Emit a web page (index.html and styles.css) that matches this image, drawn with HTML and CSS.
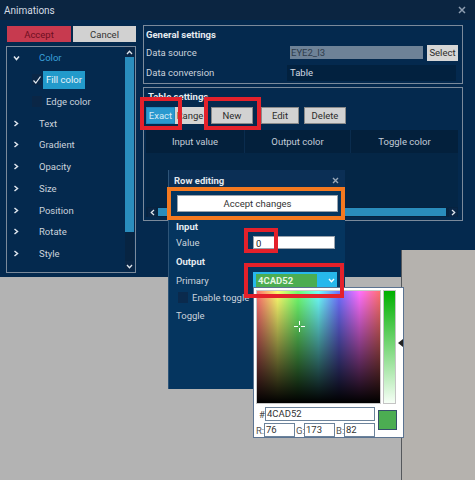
FILE: index.html
```html
<!DOCTYPE html>
<html lang="en">
<head>
    <meta charset="UTF-8">
    <title>Animations</title>
    <link rel="stylesheet" href="styles.css">
</head>
<body>
<div class="screen">
    <div class="window">
        <div class="titlebar">
            <span>Animations</span>
            <svg class="close" width="8" height="8" viewBox="0 0 8 8"><path d="M1 1L7 7M7 1L1 7" stroke="#8d9db0" stroke-width="1.5"/></svg>
        </div>
        <div class="win-body">
            <div class="left-col">
                <div class="action-row">
                    <button class="btn btn-accept">Accept</button>
                    <button class="btn btn-cancel">Cancel</button>
                </div>
                <div class="tree">
                    <ul class="tree-list">
                        <li class="tree-item open">
                            <span class="chev"><svg width="7" height="6" viewBox="0 0 7 6"><polyline points="1,1.5 3.5,4.5 6,1.5" fill="none" stroke="#dfe6ee" stroke-width="1.5"/></svg></span>
                            <span class="label-open">Color</span>
                        </li>
                        <li class="tree-item child">
                            <span class="check"><svg width="10" height="10" viewBox="0 0 10 10"><polyline points="1.5,5.5 3.8,8 8.5,1.5" fill="none" stroke="#e6ecf2" stroke-width="1.2"/></svg></span>
                            <span class="label-sel">Fill color</span>
                        </li>
                        <li class="tree-item child">
                            <span class="check"></span>
                            <span class="label-child">Edge color</span>
                        </li>
                        <li class="tree-item"><span class="chev"><svg width="6" height="7" viewBox="0 0 6 7"><polyline points="1.5,1 4.5,3.5 1.5,6" fill="none" stroke="#dfe6ee" stroke-width="1.5"/></svg></span>Text</li>
                        <li class="tree-item"><span class="chev"><svg width="6" height="7" viewBox="0 0 6 7"><polyline points="1.5,1 4.5,3.5 1.5,6" fill="none" stroke="#dfe6ee" stroke-width="1.5"/></svg></span>Gradient</li>
                        <li class="tree-item"><span class="chev"><svg width="6" height="7" viewBox="0 0 6 7"><polyline points="1.5,1 4.5,3.5 1.5,6" fill="none" stroke="#dfe6ee" stroke-width="1.5"/></svg></span>Opacity</li>
                        <li class="tree-item"><span class="chev"><svg width="6" height="7" viewBox="0 0 6 7"><polyline points="1.5,1 4.5,3.5 1.5,6" fill="none" stroke="#dfe6ee" stroke-width="1.5"/></svg></span>Size</li>
                        <li class="tree-item"><span class="chev"><svg width="6" height="7" viewBox="0 0 6 7"><polyline points="1.5,1 4.5,3.5 1.5,6" fill="none" stroke="#dfe6ee" stroke-width="1.5"/></svg></span>Position</li>
                        <li class="tree-item"><span class="chev"><svg width="6" height="7" viewBox="0 0 6 7"><polyline points="1.5,1 4.5,3.5 1.5,6" fill="none" stroke="#dfe6ee" stroke-width="1.5"/></svg></span>Rotate</li>
                        <li class="tree-item"><span class="chev"><svg width="6" height="7" viewBox="0 0 6 7"><polyline points="1.5,1 4.5,3.5 1.5,6" fill="none" stroke="#dfe6ee" stroke-width="1.5"/></svg></span>Style</li>
                        <li class="tree-item"><span class="chev"><svg width="6" height="7" viewBox="0 0 6 7"><polyline points="1.5,1 4.5,3.5 1.5,6" fill="none" stroke="#dfe6ee" stroke-width="1.5"/></svg></span>Fill</li>
                    </ul>
                    <div class="vscroll">
                        <div class="sb-arrow"><svg width="7" height="5" viewBox="0 0 7 5"><polyline points="1,4 3.5,1.3 6,4" fill="none" stroke="#dfe6ee" stroke-width="1.3"/></svg></div>
                        <div class="sb-thumb"></div>
                        <div class="sb-track"></div>
                        <div class="sb-arrow"><svg width="7" height="5" viewBox="0 0 7 5"><polyline points="1,1 3.5,3.7 6,1" fill="none" stroke="#dfe6ee" stroke-width="1.3"/></svg></div>
                    </div>
                </div>
            </div>

            <div class="right-col">
                <div class="group general">
                    <div class="group-title">General settings</div>
                    <div class="field-row">
                        <span class="field-label">Data source</span>
                        <span class="source-input">EYE2_I3</span>
                        <button class="btn select-btn">Select</button>
                    </div>
                    <div class="field-row second">
                        <span class="field-label">Data conversion</span>
                        <span class="conv-field">Table</span>
                    </div>
                </div>

                <div class="group table-group">
                    <div class="group-title">Table settings</div>
                    <div class="tool-row">
                        <button class="btn btn-exact">Exact</button>
                        <button class="btn btn-range">Range</button>
                        <button class="btn btn-new">New</button>
                        <button class="btn btn-edit">Edit</button>
                        <button class="btn btn-delete">Delete</button>
                    </div>
                    <div class="table-head">
                        <span>Input value</span>
                        <span>Output color</span>
                        <span>Toggle color</span>
                    </div>
                    <div class="table-body"></div>
                    <div class="hscroll">
                        <div class="hs-arrow"><svg width="5" height="7" viewBox="0 0 5 7"><polyline points="4,1 1.3,3.5 4,6" fill="none" stroke="#dfe6ee" stroke-width="1.3"/></svg></div>
                        <div class="hs-thumb"></div>
                        <div class="hs-arrow"><svg width="5" height="7" viewBox="0 0 5 7"><polyline points="1,1 3.7,3.5 1,6" fill="none" stroke="#dfe6ee" stroke-width="1.3"/></svg></div>
                    </div>
                </div>
            </div>
        </div>
    </div>

    <div class="dock-right"></div>

    <!-- row editing dialog -->
    <div class="row-dialog">
        <div class="dialog-head">
            <span>Row editing</span>
            <svg width="7" height="7" viewBox="0 0 7 7"><path d="M1 1L6 6M6 1L1 6" stroke="#9aa8b8" stroke-width="1.4"/></svg>
        </div>
        <div class="dialog-body">
            <button class="btn btn-apply">Accept changes</button>
            <div class="sect">Input</div>
            <div class="d-row value-row">
                <span class="d-label">Value</span>
                <span class="value-input">0</span>
            </div>
            <div class="sect out">Output</div>
            <div class="d-row primary-row">
                <span class="d-label">Primary</span>
                <span class="color-drop">
                    <span class="color-chip">4CAD52</span>
                    <svg width="7" height="5" viewBox="0 0 7 5"><polyline points="1,1 3.5,3.7 6,1" fill="none" stroke="#ffffff" stroke-width="1.4"/></svg>
                </span>
            </div>
            <div class="d-row toggle-row">
                <span class="check"></span>
                <span>Enable toggle</span>
            </div>
            <div class="d-row toggle-label">Toggle</div>
        </div>
    </div>

    <!-- colour picker popup -->
    <div class="picker">
        <div class="pick-top">
            <div class="sv-area">
                <svg class="cross" width="11" height="11" viewBox="0 0 11 11"><path d="M5.5 0V4M5.5 7V11M0 5.5H4M7 5.5H11" stroke="#ffffff" stroke-width="1"/></svg>
            </div>
            <div class="sat-bar"></div>
            <svg class="sat-arrow" width="5" height="8" viewBox="0 0 5 8"><polygon points="5,0 0,4 5,8" fill="#222"/></svg>
        </div>
        <div class="pick-bottom">
            <div class="pick-fields">
                <div class="hex-row">
                    <span class="hash">#</span>
                    <span class="p-input hex-input">4CAD52</span>
                </div>
                <div class="rgb-row">
                    <span class="rgb-lbl">R:</span><span class="p-input rgb-input">76</span>
                    <span class="rgb-lbl">G:</span><span class="p-input rgb-input">173</span>
                    <span class="rgb-lbl">B:</span><span class="p-input rgb-input">82</span>
                </div>
            </div>
            <div class="swatch"></div>
        </div>
    </div>

    <!-- highlight marks -->
    <div class="mark mark-exact"></div>
    <div class="mark mark-new"></div>
    <div class="mark mark-value"></div>
    <div class="mark mark-primary"></div>
    <div class="mark mark-apply"></div>
</div>
</body>
</html>
```

FILE: styles.css
```css
* {
    box-sizing: border-box;
}

body {
    margin: 0;
    background: #b3b3b3;
    font-family: Roboto, "Liberation Sans", sans-serif;
    font-size: 9.5px;
    color: #cbd3dc;
}

.screen {
    position: relative;
    width: 475px;
    height: 480px;
    overflow: hidden;
}

.window {
    width: 475px;
    height: 277px;
    background: #04294e;
}

.titlebar {
    height: 20px;
    background: #0b2541;
    display: flex;
    align-items: center;
    justify-content: space-between;
    padding: 0 9px 0 4px;
    font-size: 10px;
    color: #d5dce4;
}

.win-body {
    display: flex;
    gap: 7px;
    padding: 5px 12px 0 6px;
}

/* buttons */
.btn {
    font-family: inherit;
    font-size: 9.5px;
    height: 17px;
    padding: 0;
    border: 1px solid #8a8a8a;
    background: #d2d2d2;
    color: #2c2c2c;
    cursor: pointer;
}

/* left column */
.left-col {
    width: 130px;
    padding-top: 1px;
}

.action-row {
    display: flex;
    gap: 2px;
    height: 16px;
    margin-left: 1px;
}

.btn-accept {
    width: 64px;
    height: 16px;
    background: #c73a4f;
    border-color: #c73a4f;
    color: #6e0f1f;
}

.btn-cancel {
    width: 63px;
    height: 16px;
    background: #d1d1d1;
    border-color: #d1d1d1;
    color: #333;
}

.tree {
    margin-top: 4px;
    height: 227px;
    border: 1px solid #7b8a9b;
    display: flex;
    overflow: hidden;
}

.tree-list {
    flex: 1;
    list-style: none;
    margin: 0;
    padding: 0;
}

.tree-item {
    display: flex;
    align-items: center;
    height: 21.75px;
    padding-left: 6px;
    white-space: nowrap;
}

.chev {
    width: 26px;
    display: flex;
    align-items: center;
}

.label-open {
    color: #3aa1d9;
}

.tree-item.child {
    padding-left: 25px;
}

.check {
    width: 10px;
    height: 11px;
    background: #0a2646;
    display: flex;
    align-items: center;
    justify-content: center;
    margin-right: 1px;
}

.label-sel {
    background: #229acb;
    color: #e8f2f8;
    padding: 0 3px;
    height: 18px;
    line-height: 18px;
}

.label-child {
    padding-left: 3px;
}

.vscroll {
    width: 9px;
    margin: 0 1px 1px 0;
    display: flex;
    flex-direction: column;
}

.sb-arrow {
    height: 10px;
    background: #0a2646;
    display: flex;
    align-items: center;
    justify-content: center;
}

.sb-thumb {
    height: 175px;
    background: #2a8dbd;
}

.sb-track {
    flex: 1;
    background: #072442;
}

/* right column */
.right-col {
    width: 321px;
}

.group {
    border: 1px solid #7b8a9b;
}

.group-title {
    height: 17px;
    line-height: 17px;
    padding-left: 2px;
    font-weight: bold;
    color: #e6ebf0;
}

.general {
    height: 59px;
}

.field-row {
    display: flex;
    align-items: center;
    height: 19px;
    padding-left: 2px;
}

.field-row.second {
    margin-top: 1px;
}

.field-label {
    width: 141px;
}

.source-input {
    margin-left: 3px;
    width: 133px;
    height: 13px;
    line-height: 13px;
    padding-left: 1px;
    background: #6e8297;
    color: #2e3d4d;
}

.select-btn {
    margin-left: 4px;
    width: 31px;
    height: 16px;
    background: #d6d6d6;
    border-color: #d6d6d6;
}

.conv-field {
    width: 169px;
    height: 16px;
    line-height: 16px;
    padding-left: 3px;
    background: #02213f;
    color: #d2dae2;
}

.table-group {
    margin-top: 3px;
    padding: 0 4px 3px 2px;
}

.table-group .group-title {
    height: 18px;
    line-height: 18px;
}

.tool-row {
    display: flex;
    margin-top: 1px;
    height: 17px;
}

.btn-exact {
    width: 29px;
    background: #2a99cf;
    border-color: #2188bd;
    color: #d6ecf7;
}

.btn-range {
    width: 30px;
    background: #d4d4d4;
    border-color: #d4d4d4;
}

.btn-new {
    width: 42px;
    margin-left: 6px;
}

.btn-edit {
    width: 38px;
    margin-left: 8px;
}

.btn-delete {
    width: 42px;
    margin-left: 5px;
}

.table-head {
    display: grid;
    grid-template-columns: 98px 106px 1fr;
    margin-top: 6px;
    height: 23px;
    background: #03203c;
}

.table-head span {
    display: flex;
    align-items: center;
    justify-content: center;
    border-left: 1px solid #0a2c4e;
    color: #c3cdd8;
}

.table-head span:first-child {
    border-left: none;
}

.table-body {
    height: 54px;
    background: #042646;
}

.hscroll {
    display: flex;
    align-items: center;
    height: 10px;
    background: #062340;
    padding: 0 1px 0 2px;
}

.hs-arrow {
    width: 8px;
    height: 9px;
    display: flex;
    align-items: center;
    justify-content: center;
    background: #0a2646;
}

.hs-thumb {
    flex: 1;
    height: 8px;
    margin: 0 3px 0 2px;
    background: #2a8dbd;
}

.dock-right {
    position: absolute;
    left: 401px;
    top: 250px;
    width: 74px;
    height: 230px;
    background: #b5b2ae;
    border-left: 1px solid #55585c;
}

/* row editing dialog */
.row-dialog {
    position: absolute;
    left: 168px;
    top: 170px;
    width: 177px;
    height: 219px;
    background: #05355f;
    border-left: 1px solid #2d5478;
}

.dialog-head {
    height: 20px;
    background: #0b2f55;
    display: flex;
    align-items: center;
    justify-content: space-between;
    padding: 0 6px 0 5px;
    font-weight: bold;
    color: #e2e8ee;
}

.dialog-body {
    padding: 5px 6px 0 7px;
}

.btn-apply {
    display: block;
    width: 161px;
    margin-left: 1px;
    background: #ffffff;
    border-color: #9aa3ad;
    color: #333;
}

.sect {
    margin-top: 7px;
    height: 16px;
    line-height: 16px;
    font-weight: bold;
    color: #e6ebf0;
}

.sect.out {
    margin-top: 4px;
}

.d-row {
    display: flex;
    align-items: center;
}

.d-label {
    width: 77px;
}

.value-row {
    height: 15px;
}

.value-input {
    width: 82px;
    height: 13px;
    line-height: 13px;
    padding-left: 2px;
    background: #ffffff;
    border: 1px solid #9aa3ad;
    color: #222;
}

.primary-row {
    height: 20px;
}

.color-drop {
    width: 84px;
    height: 17px;
    background: #27b8ec;
    display: flex;
    align-items: center;
    padding-left: 3px;
    gap: 11px;
}

.color-chip {
    width: 61px;
    height: 13px;
    line-height: 13px;
    padding-left: 2px;
    background: #4cad52;
    color: #e4f6e4;
    font-weight: bold;
}

.toggle-row {
    height: 14px;
    padding-left: 2px;
}

.toggle-row .check {
    margin-right: 4px;
    background: #0a2a4d;
}

.toggle-label {
    height: 18px;
    margin-top: 2px;
}

/* colour picker */
.picker {
    position: absolute;
    left: 253px;
    top: 287px;
    width: 151px;
    height: 151px;
    background: #ffffff;
    border: 1px solid #5b7391;
    padding: 2px 0 0 2px;
}

.pick-top {
    position: relative;
    display: flex;
    gap: 2px;
    height: 114px;
}

.sv-area {
    position: relative;
    width: 125px;
    border: 1px solid #c8c8c8;
    background:
        linear-gradient(to bottom, rgba(0, 0, 0, 0), #000000),
        linear-gradient(to right, #ff7070, #ffff70 16.7%, #70ff70 33.3%, #70ffff 50%, #7070ff 66.7%, #ff70ff 83.3%, #ff7070);
}

.cross {
    position: absolute;
    left: 37px;
    top: 30px;
}

.sat-bar {
    width: 13px;
    border: 1px solid #c4c4c4;
    background: linear-gradient(to bottom, #00b000, #f6fff6);
}

.sat-arrow {
    position: absolute;
    left: 142px;
    top: 49px;
}

.pick-bottom {
    display: flex;
    margin-top: 3px;
}

.pick-fields {
    width: 122px;
}

.hex-row {
    display: flex;
    align-items: center;
    height: 14px;
}

.hash {
    width: 9px;
    padding-left: 3px;
    color: #444;
}

.p-input {
    height: 14px;
    line-height: 12px;
    border: 1px solid #6c839b;
    padding-left: 1px;
    color: #333;
}

.hex-input {
    width: 110px;
}

.rgb-row {
    display: flex;
    align-items: center;
    margin-top: 2px;
}

.rgb-lbl {
    width: 8px;
    color: #555;
}

.rgb-input {
    width: 31px;
    margin-right: 1px;
}

.swatch {
    width: 19px;
    height: 20px;
    margin-top: 3px;
    background: #4cad52;
    border: 1px solid #35506a;
}

/* annotation marks */
.mark {
    position: absolute;
    border: 4px solid #e4212b;
}

.mark-exact {
    left: 140px;
    top: 97px;
    width: 42px;
    height: 33px;
}

.mark-new {
    left: 204px;
    top: 97px;
    width: 57px;
    height: 33px;
}

.mark-value {
    left: 244px;
    top: 228px;
    width: 34px;
    height: 25px;
}

.mark-primary {
    left: 244px;
    top: 263px;
    width: 100px;
    height: 35px;
}

.mark-apply {
    left: 167px;
    top: 187px;
    width: 178px;
    height: 33px;
    border-color: #f47920;
}
```
